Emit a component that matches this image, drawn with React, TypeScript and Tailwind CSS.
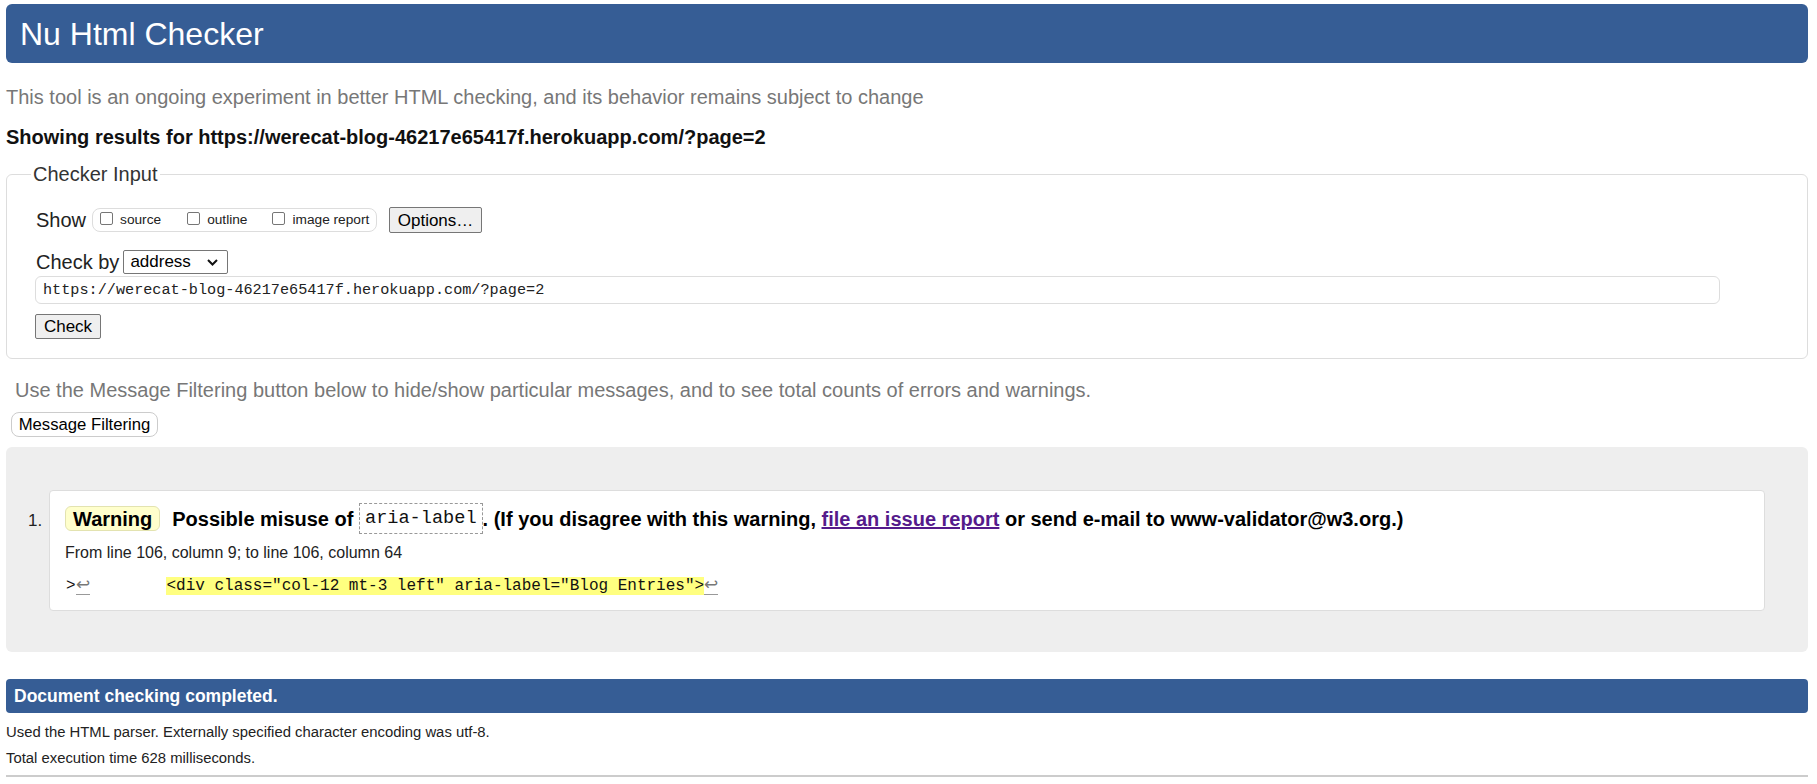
import React from 'react';

const sans = { fontFamily: '"Liberation Sans", Arial, sans-serif' };

const Checkbox: React.FC<{ label: string; className?: string }> = ({ label, className = '' }) => (
  <span className={`flex items-center ${className}`}>
    <span className="w-[13px] h-[13px] border border-[#767676] rounded-[2px] bg-white mb-[4px]" />
    <span className="ml-[7px] text-[13.7px] leading-[16px] text-[#222]">{label}</span>
  </span>
);

const LineBreak: React.FC = () => (
  <span className="text-[#777] text-[17px] border-b border-[#999] leading-[16px]" style={sans}>↩</span>
);

export default function App() {
  return (
    <div className="min-h-screen bg-white pl-[6px] pr-[9px] pt-[4px] text-[#111]" style={sans}>
      {/* page title */}
      <h1 className="h-[59px] rounded-[6px] bg-[#365d95] text-white text-[32px] pl-[14px] flex items-center">
        Nu Html Checker
      </h1>

      <p className="mt-[23px] text-[20px] leading-[23px] text-[#777]">
        This tool is an ongoing experiment in better HTML checking, and its behavior remains subject to change
      </p>
      <p className="mt-[17px] text-[20px] leading-[23px] font-bold text-[#111]">
        Showing results for https://werecat-blog-46217e65417f.herokuapp.com/?page=2
      </p>

      {/* checker input */}
      <fieldset className="mt-[14px] border border-[#ddd] rounded-[6px] pl-[28px] pr-[87px] pb-[19px]">
        <legend className="-ml-[4px] px-[2px] text-[20px] leading-[23px] text-[#333]">Checker Input</legend>

        <div className="flex items-center h-[26px] mt-[21px]">
          <span className="text-[20px] text-[#222] pl-[1px]">Show</span>
          <div className="ml-[6px] h-[24px] w-[285px] border border-[#ddd] rounded-[8px] flex items-center pl-[7px]">
            <Checkbox label="source" />
            <Checkbox label="outline" className="ml-[26px]" />
            <Checkbox label="image report" className="ml-[25px]" />
          </div>
          <button className="ml-[12px] h-[26px] w-[93px] bg-[#efefef] border border-[#767676] rounded-[2px] text-[17px] text-black">
            Options…
          </button>
        </div>

        <div className="flex items-center h-[24px] mt-[17px]">
          <span className="text-[20px] text-[#222] pl-[1px]">Check by</span>
          <div className="ml-[4px] h-[24px] w-[105px] border border-[#767676] rounded-[2px] bg-white flex items-center justify-between pl-[6px] pr-[9px]">
            <span className="text-[17px] text-black">address</span>
            <svg width="11" height="7" viewBox="0 0 11 7">
              <polyline points="1,1 5.5,5.5 10,1" fill="none" stroke="#111" strokeWidth="2" />
            </svg>
          </div>
        </div>

        <div className="mt-[2px] h-[28px] border border-[#ddd] rounded-[6px] flex items-center pl-[7px]">
          <span className="text-[15.2px] text-[#222]" style={{ fontFamily: '"Liberation Mono", monospace' }}>
            https://werecat-blog-46217e65417f.herokuapp.com/?page=2
          </span>
        </div>

        <button className="mt-[10px] h-[25px] w-[66px] bg-[#efefef] border border-[#767676] rounded-[2px] text-[17px] text-black flex items-center justify-center">
          Check
        </button>
      </fieldset>

      <p className="mt-[20px] ml-[9px] text-[20px] leading-[23px] text-[#777]">
        Use the Message Filtering button below to hide/show particular messages, and to see total counts of errors and warnings.
      </p>
      <button className="mt-[10px] ml-[5px] h-[25px] w-[147px] bg-white border border-[#ccc] rounded-[8px] text-[16.7px] text-black flex items-center justify-center">
        Message Filtering
      </button>

      {/* results */}
      <div className="mt-[10px] bg-[#eee] rounded-[6px] pt-[43px] pb-[41px] pl-[22px] pr-[43px] flex">
        <span className="w-[21px] text-[17px] pt-[22px] leading-[17px] text-[#222]">1.</span>
        <div className="flex-1 bg-white border border-[#ddd] rounded-[4px] pl-[15px] pt-[12px] pb-[13px]">
          <div className="flex items-center h-[31px] text-[20px] font-bold text-black whitespace-pre">
            <span className="h-[25px] px-[7px] bg-[#ffffcc] border border-[#e3e3b0] rounded-[6px] flex items-center">
              Warning
            </span>
            <span className="ml-[12px]">Possible misuse of </span>
            <span
              className="h-[31px] px-[5px] border border-dashed border-[#999] flex items-center font-normal text-[18.6px] text-[#111]"
              style={{ fontFamily: '"Liberation Mono", monospace' }}
            >
              aria-label
            </span>
            <span>. (If you disagree with this warning, </span>
            <span className="text-[#551a8b] underline">file an issue report</span>
            <span> or send e-mail to www-validator@w3.org.)</span>
          </div>
          <p className="mt-[9px] text-[16px] leading-[19px] text-[#222]">
            From line 106, column 9; to line 106, column 64
          </p>
          <p
            className="mt-[14px] text-[16px] leading-[21px] text-[#111] whitespace-pre pl-[1px]"
            style={{ fontFamily: '"Liberation Mono", monospace' }}
          >
            {'>'}<LineBreak />{'        '}
            <span className="bg-[#ffff80]">{'<div class="col-12 mt-3 left" aria-label="Blog Entries">'}</span>
            <LineBreak />
          </p>
        </div>
      </div>

      <div className="mt-[27px] h-[34px] rounded-[4px] bg-[#365d95] text-white font-bold text-[17.5px] flex items-center pl-[8px]">
        Document checking completed.
      </div>
      <p className="mt-[10px] text-[14.85px] leading-[18px] text-[#222]">
        Used the HTML parser. Externally specified character encoding was utf-8.
      </p>
      <p className="mt-[8px] text-[14.85px] leading-[18px] text-[#222]">Total execution time 628 milliseconds.</p>
      <hr className="mt-[8px] border-t-2 border-[#ccc]" />
    </div>
  );
}
